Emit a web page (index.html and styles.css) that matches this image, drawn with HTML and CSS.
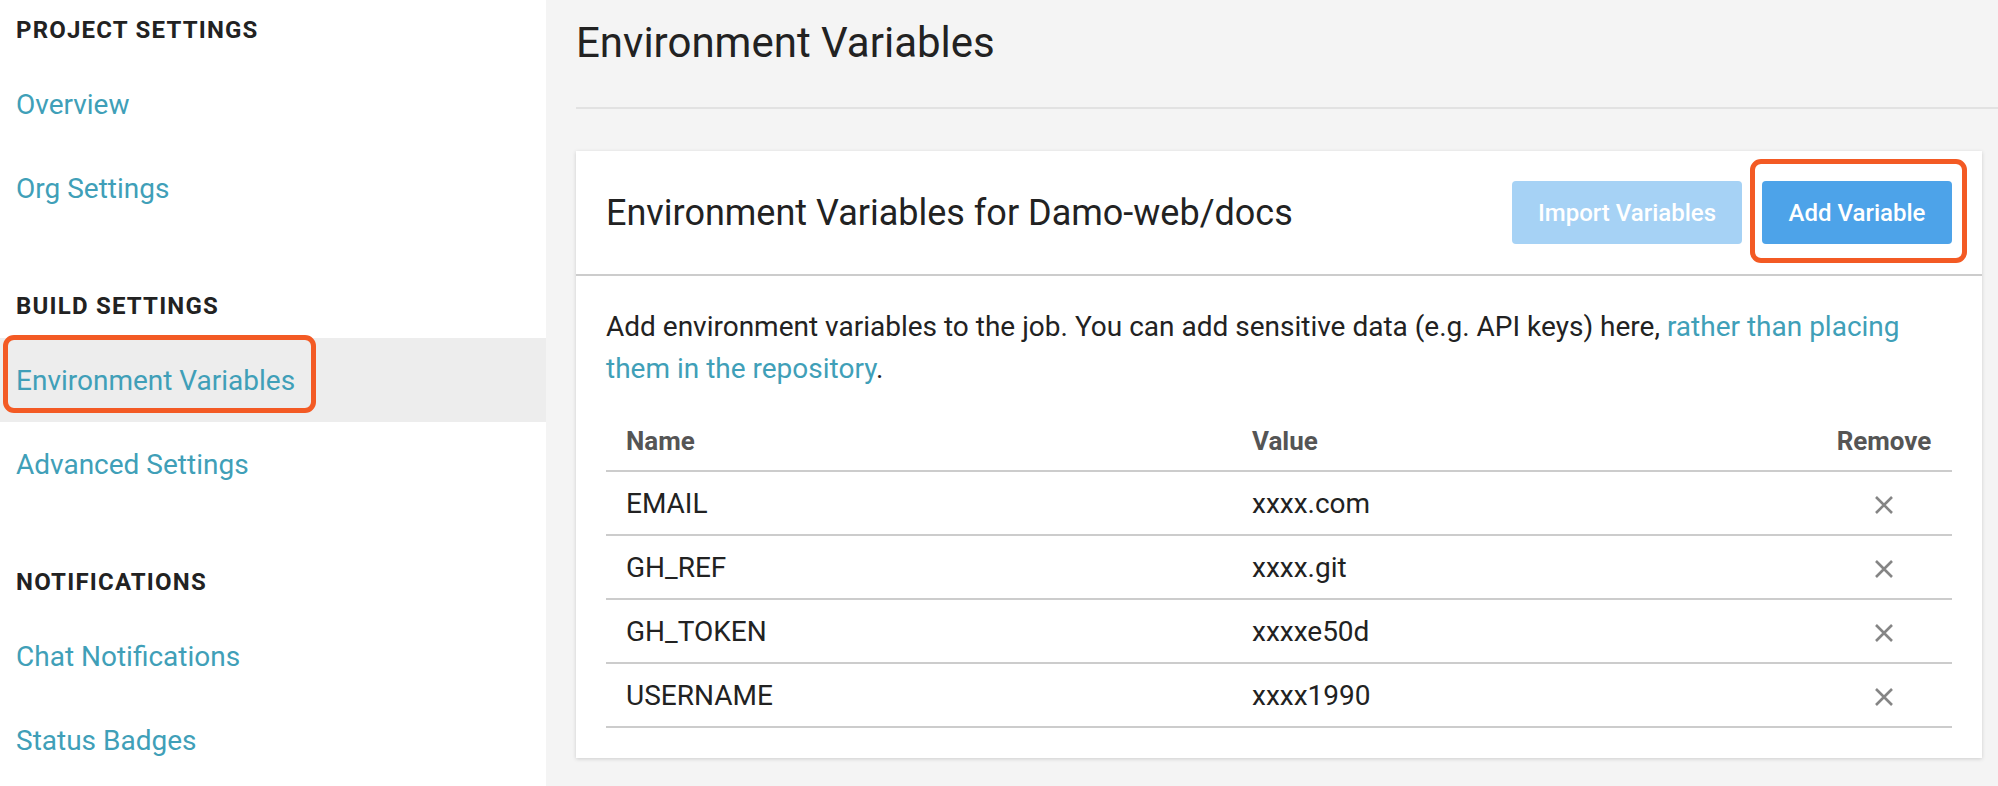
FILE: index.html
```html
<!DOCTYPE html>
<html>
<head>
<meta charset="utf-8">
<link rel="stylesheet" href="styles.css">
</head>
<body>
<div class="layout">
  <aside class="sidebar">
    <h3 class="side-heading first">PROJECT SETTINGS</h3>
    <a class="side-link" href="#">Overview</a>
    <a class="side-link" href="#">Org Settings</a>

    <h3 class="side-heading">BUILD SETTINGS</h3>
    <a class="side-link active" href="#"><span class="highlight">Environment Variables</span></a>
    <a class="side-link" href="#">Advanced Settings</a>

    <h3 class="side-heading">NOTIFICATIONS</h3>
    <a class="side-link" href="#">Chat Notifications</a>
    <a class="side-link" href="#">Status Badges</a>
  </aside>

  <main class="main">
    <header class="page-header">
      <h1 class="page-title">Environment Variables</h1>
    </header>

    <section class="card">
      <div class="card-header">
        <h2 class="card-title">Environment Variables for Damo-web/docs</h2>
        <div class="actions">
          <button class="btn btn-disabled">Import Variables</button>
          <span class="btn-frame"><button class="btn btn-primary">Add Variable</button></span>
        </div>
      </div>
      <div class="card-body">
        <p class="desc">Add environment variables to the job. You can add sensitive data (e.g. API keys) here, <a href="#">rather than placing them in the repository</a>.</p>
        <table class="vars">
          <colgroup>
            <col class="c-name">
            <col class="c-value">
            <col class="c-remove">
          </colgroup>
          <thead>
            <tr><th>Name</th><th>Value</th><th class="center">Remove</th></tr>
          </thead>
          <tbody>
            <tr><td>EMAIL</td><td>xxxx.com</td><td class="center"><svg class="x" viewBox="0 0 18 18"><path d="M1 1L17 17M17 1L1 17"/></svg></td></tr>
            <tr><td>GH_REF</td><td>xxxx.git</td><td class="center"><svg class="x" viewBox="0 0 18 18"><path d="M1 1L17 17M17 1L1 17"/></svg></td></tr>
            <tr><td>GH_TOKEN</td><td>xxxxe50d</td><td class="center"><svg class="x" viewBox="0 0 18 18"><path d="M1 1L17 17M17 1L1 17"/></svg></td></tr>
            <tr><td>USERNAME</td><td>xxxx1990</td><td class="center"><svg class="x" viewBox="0 0 18 18"><path d="M1 1L17 17M17 1L1 17"/></svg></td></tr>
          </tbody>
        </table>
      </div>
    </section>
  </main>
</div>
</body>
</html>
```

FILE: styles.css
```css
* { box-sizing: border-box; }

html, body {
  margin: 0;
  padding: 0;
  height: 100%;
}

body {
  font-family: Roboto, "Liberation Sans", sans-serif;
  color: #222;
  background: #f4f4f4;
  overflow: hidden;
}

.layout {
  display: flex;
  min-height: 786px;
}

.sidebar {
  width: 546px;
  flex: none;
  background: #fff;
  display: flex;
  flex-direction: column;
  padding-top: 14px;
}

.side-heading {
  margin: 60px 0 16px;
  padding: 0 16px;
  font-size: 24px;
  line-height: 32px;
  font-weight: 700;
  letter-spacing: 1.2px;
  color: #222;
}

.side-heading.first {
  margin-top: 0;
}

.side-link {
  display: flex;
  align-items: center;
  height: 84px;
  padding: 0 16px;
  font-size: 28px;
  color: #409fb8;
  text-decoration: none;
}

.side-link.active {
  background: #ededed;
  position: relative;
}

.side-link.active .highlight {
  position: relative;
}

.side-link.active .highlight::after {
  content: "";
  position: absolute;
  left: -13px;
  right: -21px;
  top: -29px;
  bottom: -16px;
  border: 5px solid #f35a24;
  border-radius: 11px;
}

.main {
  flex: 1;
  padding: 18px 16px 0 30px;
}

.page-header {
  margin-right: -16px;
  padding-bottom: 39px;
  border-bottom: 2px solid #e2e2e2;
}

.page-title {
  margin: 0;
  font-size: 42px;
  line-height: 50px;
  font-weight: 400;
  color: #222;
}

.card {
  margin-top: 42px;
  background: #fff;
  box-shadow: 0 1px 4px rgba(0, 0, 0, 0.16);
}

.card-header {
  display: flex;
  align-items: center;
  justify-content: space-between;
  padding: 30px 30px;
  border-bottom: 2px solid #cccccc;
}

.card-title {
  margin: 0;
  font-size: 36px;
  line-height: 42px;
  font-weight: 400;
  color: #222;
}

.actions {
  display: flex;
  align-items: center;
  gap: 20px;
}

.btn {
  height: 63px;
  border: none;
  border-radius: 4px;
  font-family: Roboto, "Liberation Sans", sans-serif;
  font-size: 24px;
  font-weight: 500;
  color: #fff;
  padding: 0;
}

.btn-disabled {
  width: 230px;
  background: #a6d2f5;
}

.btn-primary {
  width: 190px;
  background: #4da3e9;
}

.btn-frame {
  position: relative;
  display: flex;
}

.btn-frame::after {
  content: "";
  position: absolute;
  left: -12px;
  right: -15px;
  top: -22px;
  bottom: -19px;
  border: 5px solid #f35a24;
  border-radius: 11px;
}

.card-body {
  padding: 30px 30px 30px;
}

.desc {
  margin: 0 0 16px;
  font-size: 28px;
  line-height: 42px;
  color: #222;
}

.desc a {
  color: #409fb8;
  text-decoration: none;
}

.vars {
  width: 100%;
  border-collapse: collapse;
  table-layout: fixed;
}

.c-name { width: 626px; }
.c-value { width: 584px; }
.c-remove { width: 136px; }

.vars th {
  text-align: left;
  font-size: 26px;
  line-height: 32px;
  font-weight: 700;
  color: #555;
  padding: 19px 20px 13px;
  border-bottom: 2px solid #cccccc;
}

.vars td {
  font-size: 28px;
  height: 64px;
  padding: 0 20px;
  color: #222;
  border-bottom: 2px solid #cccccc;
  vertical-align: middle;
}

.vars .center {
  text-align: center;
}

.x {
  width: 18px;
  height: 18px;
  display: inline-block;
  vertical-align: middle;
  stroke: #858585;
  stroke-width: 2.6;
  fill: none;
}
```
